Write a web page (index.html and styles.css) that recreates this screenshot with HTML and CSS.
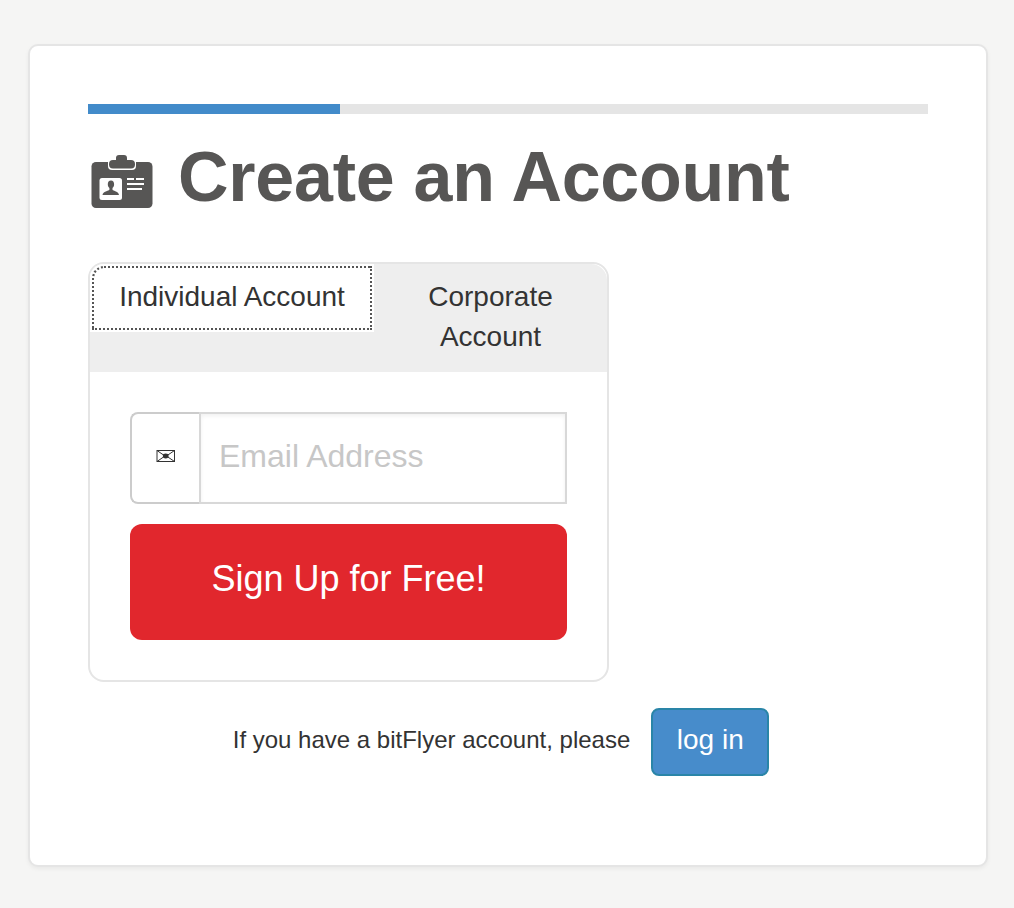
FILE: index.html
```html
<!DOCTYPE html>
<html lang="en">
  <head>
    <meta charset="UTF-8" />
    <meta name="viewport" content="width=device-width, initial-scale=1.0" />
    <title>Create an Account</title>
    <link rel="stylesheet" href="styles.css">
  </head>
  <body>
    <div class="container">
      <div class="progress">
        <div class="progress-bar"></div>
      </div>

      <h1 class="title">
        <svg class="title-icon" width="62" height="54" viewBox="0 0 62 54">
          <rect x="0.5" y="7" width="61" height="46" rx="4.500" fill="#575655" />
          <path d="M17 6v5q0 4 4 4h20q4 0 4-4V6z" fill="#fff" />
          <path d="M22 5h3V3q0-3 3-3h5q3 0 3 3v2h4q4 0 4 4v.5q0 4-4 4H22q-4 0-4-4V9Q18 5 22 5z" fill="#575655" />
          <rect x="8.500" y="23" width="22.500" height="22" rx="2.500" fill="#fff" />
          <path d="M20 25.500c-2.200 0-3.200 1.600-3.200 3.800 0 1.700.6 3 1.600 3.800v1.700c-.8 1.400-6.500 1.400-6.900 5.200h16.500c-.4-3.800-5.700-3.800-6.500-5.200v-1.700c1-.8 1.600-2.100 1.600-3.800 0-2.200-1-3.800-3.100-3.800z" fill="#575655" />
          <path d="M36 24h7M45 24h8M36 29h17M36 34h15" stroke="#fff" stroke-width="2" />
        </svg>
        <span>Create an Account</span>
      </h1>

      <div class="signup-box">
        <div class="tabs">
          <a class="tab active">Individual Account</a>
          <a class="tab">Corporate Account</a>
        </div>
        <form class="signup-form">
          <div class="input-group">
            <span class="input-addon">
              <svg width="20" height="14" viewBox="0 0 20 14">
                <rect x="1" y="1.500" width="17.500" height="11" fill="none" stroke="#333" />
                <path d="M1 1.500l8.700 6 8.800-6M1 12.500l8.700-6 8.800 6" fill="none" stroke="#333" />
                <ellipse cx="9.700" cy="7" rx="2.900" ry="2.400" fill="#333" />
              </svg>
            </span>
            <input type="text" placeholder="Email Address" />
          </div>
          <button type="button" class="signup-button">Sign Up for Free!</button>
        </form>
      </div>

      <div class="login">
        <span>If you have a bitFlyer account, please</span>
        <a class="login-button">log in</a>
      </div>
    </div>
  </body>
</html>
```
FILE: styles.css
```css
* {
  margin: 0;
  padding: 0;
  box-sizing: border-box;
}

body {
  padding: 44px 26px 0 28px;
  min-height: 100vh;
  background: #f5f5f4;
  color: #333;
  font-family: "Liberation Sans", Arial, sans-serif;
  overflow: hidden;
}

.container {
  height: 823px;
  padding: 58px;
  background: white;
  border: 2px solid #e5e5e5;
  border-radius: 10px;
  box-shadow: 0 2px 4px rgba(0, 0, 0, 0.05);
}

.progress {
  height: 10px;
  background: #e5e5e5;
}

.progress-bar {
  width: 30%;
  height: 100%;
  background: #428bca;
}

.title {
  display: flex;
  height: 80px;
  margin-top: 23px;
  padding-left: 3px;
  color: #575655;
  font-size: 70px;
  letter-spacing: -0.25px;
  line-height: 80px;
}

.title-icon {
  flex: none;
  margin: 18px 25px 0 0;
}

.signup-box {
  width: 521px;
  height: 420px;
  margin-top: 45px;
  border: 2px solid #e5e5e5;
  border-radius: 16px;
}

.tabs {
  display: flex;
  align-items: flex-start;
  height: 108px;
  background: #eee;
  border-radius: 14px 16px 0 0;
}

.tab {
  flex: 1;
  padding: 13px 50px 0;
  font-size: 28px;
  line-height: 40px;
  text-align: center;
}

.tab.active {
  flex: none;
  width: 284px;
  height: 68px;
  padding: 13px 0 0;
  background: white;
  border-radius: 14px 0 0 0;
  outline: 2px dotted #555;
  outline-offset: -4px;
}

/* 이메일 입력 */
.signup-form {
  padding: 40px;
}

.input-group {
  display: flex;
  height: 92px;
  margin-bottom: 20px;
}

.input-addon {
  display: flex;
  justify-content: center;
  align-items: center;
  width: 69px;
  padding: 0 0 4px 1px;
  border: 2px solid #ccc;
  border-right: none;
  border-radius: 8px 0 0 8px;
}

input {
  flex: 1;
  min-width: 0;
  padding: 0 18px 4px;
  border: 2px solid #d8d8d8;
  box-shadow: inset 0 2px 4px rgba(0, 0, 0, 0.06);
  font-family: inherit;
  font-size: 32px;
  outline: none;
}

input::placeholder {
  color: #c7c7c7;
}

.signup-button {
  display: block;
  width: 100%;
  height: 116px;
  padding-bottom: 6px;
  border: none;
  border-radius: 12px;
  background: #e1272d;
  color: white;
  font-family: inherit;
  font-size: 36px;
  cursor: pointer;
}

.login {
  display: flex;
  justify-content: center;
  gap: 21px;
  margin-top: 26px;
  padding-right: 14px;
  font-size: 24px;
  line-height: 64px;
}

.login-button {
  width: 118px;
  height: 68px;
  border: 2px solid #2a85a8;
  border-radius: 8px;
  background: #478ccb;
  color: white;
  font-size: 28px;
  line-height: 60px;
  text-align: center;
  cursor: pointer;
}
```
